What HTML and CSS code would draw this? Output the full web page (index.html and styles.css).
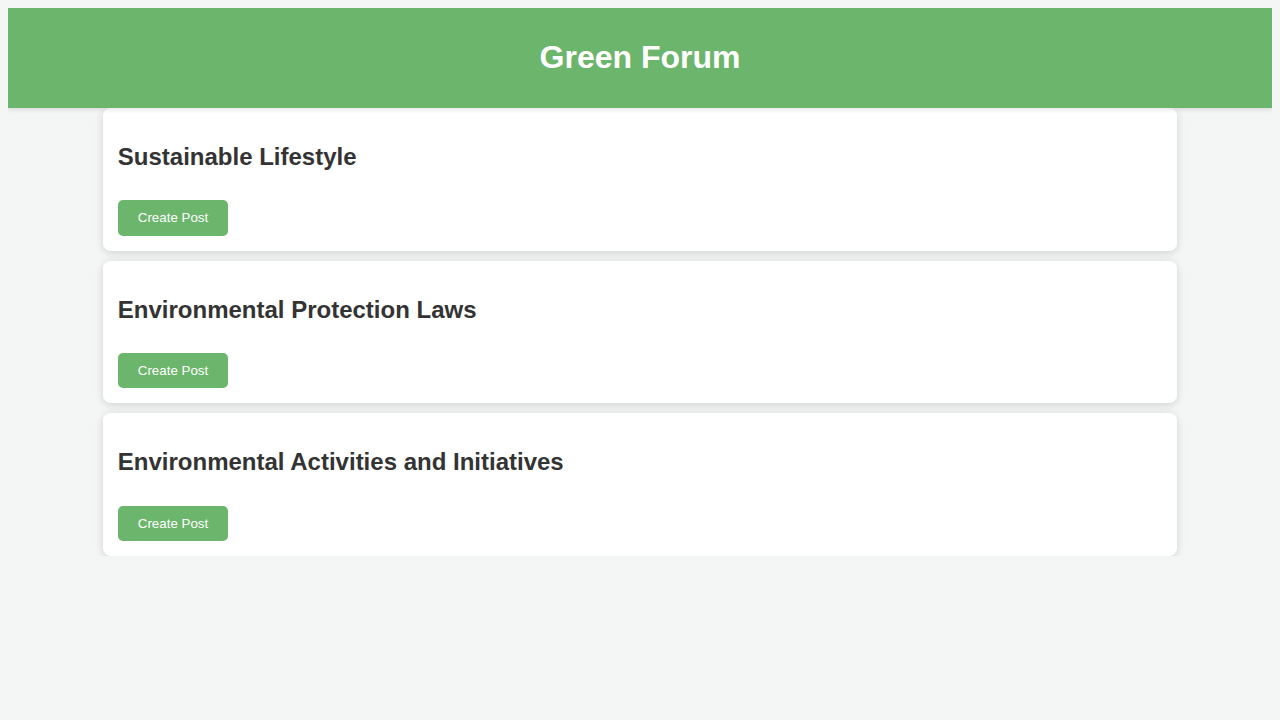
FILE: index.html
```html
<!DOCTYPE html>
<html lang="en">
<head>
<meta charset="utf-8">
<title>Green Forum</title>
<link rel="stylesheet" href="styles.css">
</head>
<body>
<header class="site-header">
  <h1>Green Forum</h1>
</header>
<main class="forum">
  <section class="category">
    <h2>Sustainable Lifestyle</h2>
    <button class="btn">Create Post</button>
  </section>
  <section class="category">
    <h2>Environmental Protection Laws</h2>
    <button class="btn">Create Post</button>
  </section>
  <section class="category">
    <h2>Environmental Activities and Initiatives</h2>
    <button class="btn">Create Post</button>
  </section>
</main>
</body>
</html>
```
FILE: styles.css
```css
body {
  margin: 8px;
  background: #f4f6f5;
  font-family: "Liberation Sans", Arial, sans-serif;
  color: #333;
}
.site-header {
  position: relative;
  z-index: 1;
  background: #6cb56c;
  color: #fff;
  text-align: center;
  padding: 10px 0;
  box-shadow: 0 2px 4px rgba(0, 0, 0, 0.1);
}
.site-header h1 {
  margin: 21.44px 0;
  font-size: 32px;
  line-height: 37px;
}
.forum {
  width: 85%;
  margin: 0 auto;
  display: flex;
  flex-direction: column;
  gap: 10px;
}
.category {
  background: #fff;
  border-radius: 8px;
  box-shadow: 0 2px 10px rgba(0, 0, 0, 0.14);
  padding: 15px;
  display: flex;
  flex-direction: column;
  align-items: flex-start;
}
.category h2 {
  margin: 19.92px 0;
  font-size: 24px;
  line-height: 27.6px;
  color: #333;
}
.btn {
  margin-top: 10px;
  background: #6cb56c;
  color: #fff;
  border: none;
  border-radius: 5px;
  padding: 10px 20px;
  font-family: "Liberation Sans", Arial, sans-serif;
  font-size: 13.33px;
  line-height: 15.33px;
  cursor: pointer;
}
```
